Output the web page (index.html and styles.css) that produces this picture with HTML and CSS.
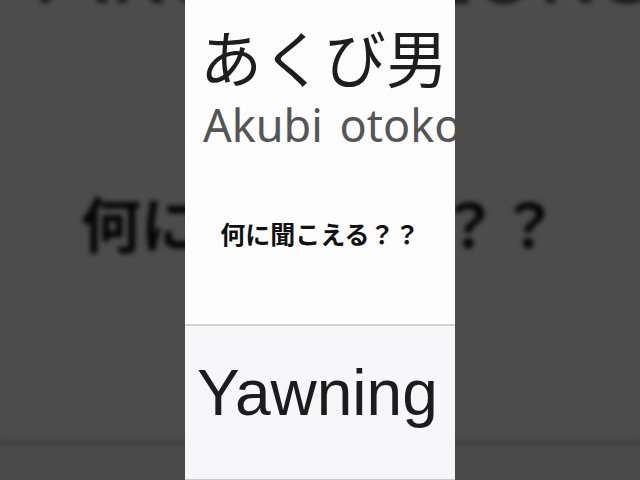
FILE: index.html
```html
<!DOCTYPE html>
<html lang="ja">
<head>
<meta charset="utf-8">
<title>あくび男</title>
<link rel="stylesheet" href="styles.css">
</head>
<body>
<div class="stage">
  <div class="card card--backdrop" aria-hidden="true">
    <div class="card__top">
      <div class="title">あくび男</div>
      <div class="romaji">Akubi otoko</div>
      <div class="question">何に聞こえる？？</div>
    </div>
    <div class="card__bottom">
      <div class="answer">Yawning</div>
    </div>
  </div>
  <main class="card card--front">
    <section class="card__top">
      <h1 class="title">あくび男</h1>
      <p class="romaji">Akubi otoko</p>
      <p class="question">何に聞こえる？？</p>
    </section>
    <section class="card__bottom">
      <p class="answer">Yawning</p>
    </section>
  </main>
</div>
</body>
</html>
```

FILE: styles.css
```css
html, body {
  margin: 0;
  padding: 0;
}

body {
  background: #4c4c4c;
  overflow: hidden;
}

.stage {
  width: 640px;
  height: 480px;
  display: grid;
  grid-template-columns: 270px;
  grid-template-rows: 480px;
  justify-content: center;
  overflow: hidden;
}

.card {
  grid-area: 1 / 1;
  width: 270px;
  height: 480px;
  display: flex;
  flex-direction: column;
  overflow: hidden;
}

.card--backdrop {
  transform: scale(2.4);
  transform-origin: 135px 241px;
  filter: brightness(0.3) blur(1px);
}

.card--front {
  position: relative;
  z-index: 1;
}

.card__top {
  height: 324px;
  background: #fdfdfd;
  padding: 25px 0 0 15px;
  box-sizing: border-box;
  display: flex;
  flex-direction: column;
}

.title {
  margin: 0;
  font-family: "Noto Sans CJK JP", sans-serif;
  font-weight: 400;
  font-size: 62px;
  line-height: 62px;
  color: #1e1e1e;
  white-space: nowrap;
}

.romaji {
  margin: 15px 0 0 3px;
  font-family: "Noto Sans", sans-serif;
  font-size: 45px;
  line-height: 45px;
  word-spacing: 5px;
  color: #555555;
  white-space: nowrap;
}

.question {
  margin: 74px 15px 0 0;
  font-family: "Noto Sans CJK JP", sans-serif;
  font-weight: 700;
  font-size: 25px;
  line-height: 25px;
  color: #111111;
  text-align: center;
  white-space: nowrap;
}

.card__bottom {
  flex: 1;
  background: #f7f7f9;
  border-top: 2px solid #d4d4d6;
  border-bottom: 1px solid #c8c8ca;
  padding: 35px 0 0 12px;
}

.answer {
  margin: 0;
  font-family: "Liberation Sans", Arial, sans-serif;
  font-size: 64px;
  line-height: 64px;
  color: #1c1c1c;
  white-space: nowrap;
}
```
